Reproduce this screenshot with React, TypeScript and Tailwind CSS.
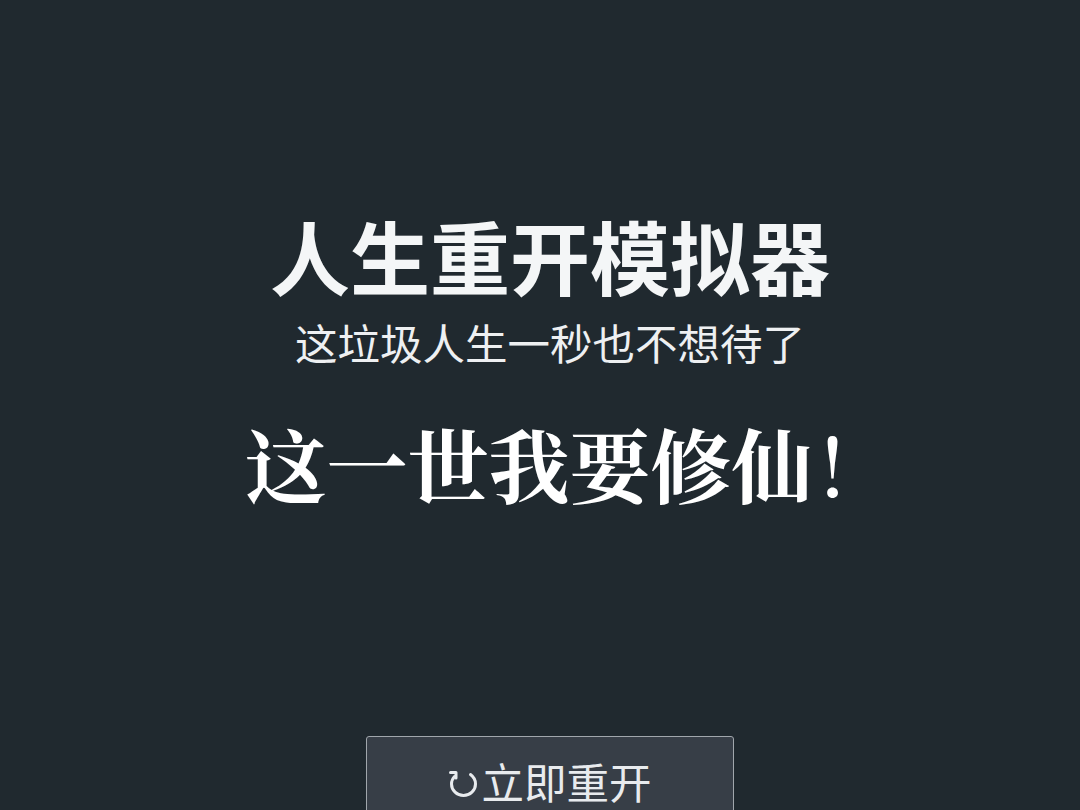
export default function App() {
  return (
    <div className="h-[810px] w-[1080px] overflow-hidden bg-[#20292f] pl-[20px] text-white flex flex-col items-center font-['Liberation_Sans','Noto_Sans_CJK_SC',sans-serif]">
      <h1 className="mt-[219px] text-[80px] leading-[86px] font-bold text-[#f4f6f7]">人生重开模拟器</h1>
      <p className="mt-[16px] text-[42.5px] leading-[50px] text-[#eef0f2]">这垃圾人生一秒也不想待了</p>
      <h2 className="mt-[41px] text-[81px] leading-[100px] font-bold font-['Noto_Serif_CJK_SC','Noto_Sans_CJK_SC',serif]">
        这一世我要修仙<span className="ml-[7px] mr-[9px] font-medium">!</span>
      </h2>
      <button className="mt-[224px] flex h-[94px] w-[368px] shrink-0 items-start justify-center rounded-[3px] border border-[#a0a6ac] bg-[#373e47] pt-[23px] text-[42.5px] leading-[50px] text-[#e8ebee]">
        <svg className="mt-[9px] mr-[3px] h-[30px] w-[30px]" viewBox="0 0 30 30" fill="none" stroke="currentColor" strokeWidth="3" strokeLinecap="round" strokeLinejoin="round">
          <path d="M22.5 5.5C26 8 27.5 11 27.5 15C27.5 21.5 22 26.5 15.5 26.5C9 26.5 3.5 21.5 3.5 15C3.5 12 4.6 9.6 6.5 7.5" />
          <path d="M2.5 3.5H8V9" />
        </svg>
        立即重开
      </button>
    </div>
  )
}
